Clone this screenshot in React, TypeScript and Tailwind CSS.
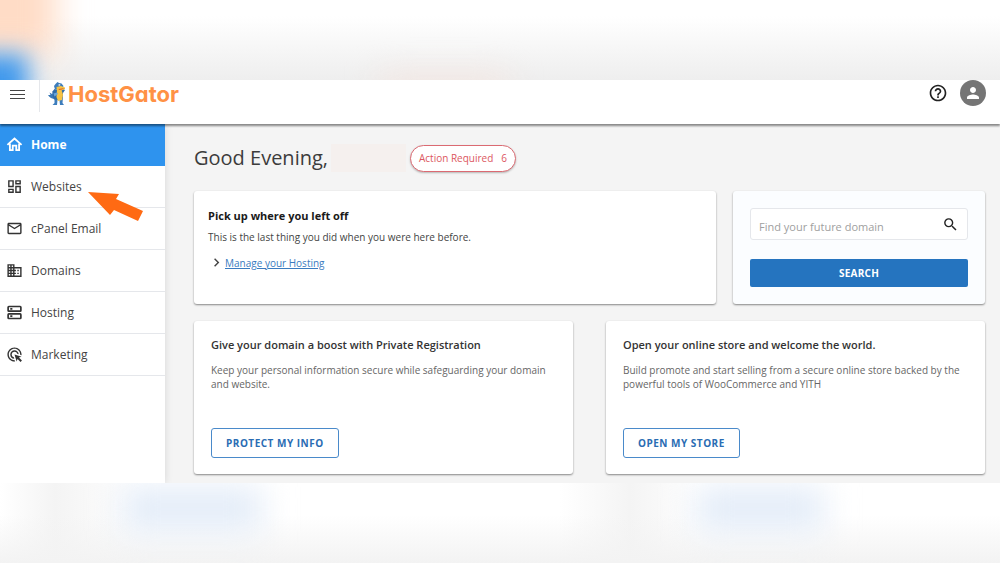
import React from 'react';
import {
  MdAdsClick,
  MdChevronRight,
  MdDomain,
  MdHelpOutline,
  MdOutlineDashboard,
  MdOutlineMail,
  MdPerson,
  MdSearch,
} from 'react-icons/md';

type IconProps = { size: number; className?: string };

const HomeIcon = ({ size, className }: IconProps) => (
  <svg width={size} height={size} viewBox="0 0 24 24" fill="none" stroke="currentColor" strokeWidth="2.6" className={className} aria-hidden="true">
    <path d="M2 12.5L12 3.5l10 9" />
    <path d="M5.5 10.5V20h4v-6.5h5V20h4v-9.5" />
  </svg>
);

const ServerIcon = ({ size, className }: IconProps) => (
  <svg width={size} height={size} viewBox="0 0 24 24" fill="none" stroke="currentColor" strokeWidth="2.4" className={className} aria-hidden="true">
    <rect x="3" y="3.5" width="18" height="6.5" rx="1" />
    <rect x="3" y="14" width="18" height="6.5" rx="1" />
    <path d="M6 6.75h3M6 17.25h3" />
  </svg>
);

const navItems = [
  { label: 'Home', icon: HomeIcon },
  { label: 'Websites', icon: MdOutlineDashboard },
  { label: 'cPanel Email', icon: MdOutlineMail },
  { label: 'Domains', icon: MdDomain },
  { label: 'Hosting', icon: ServerIcon },
  { label: 'Marketing', icon: MdAdsClick },
];

const offers = [
  {
    title: 'Give your domain a boost with Private Registration',
    text: 'Keep your personal information secure while safeguarding your domain and website.',
    action: 'PROTECT MY INFO',
  },
  {
    title: 'Open your online store and welcome the world.',
    text: 'Build promote and start selling from a secure online store backed by the powerful tools of WooCommerce and YITH',
    action: 'OPEN MY STORE',
  },
];

const GatorMark = () => (
  <svg width="18" height="24" viewBox="0 0 36 48" aria-hidden="true">
    {/* tail */}
    <path d="M15 34C8 34 3 31 0 26l5 0-2-5 5 3 2-4 5 5z" fill="#3a78b5" />
    {/* legs */}
    <path d="M13 32l0 10-4 4h9l1-10 4 0 1 10h8l-3-4 1-12z" fill="#3d7dbc" />
    {/* back and arms */}
    <path d="M13 14l-5 6 3 3-2 4 3 8 15 1 3-8 0-6 4-6-4-2-6 4z" fill="#2f6ba8" />
    {/* belly */}
    <path d="M18 17l9-1 3 9-2 11-8 2-3-8z" fill="#f6c344" />
    <path d="M11 23l7-2 2 3-7 5z" fill="#68a5da" />
    {/* head */}
    <path d="M12 8l3-4 4-4 3 2 5 1 4 5-2 5-8 3-7-1z" fill="#3d7dbc" />
    <path d="M17 10l9-2 8 3 0 3-7 3-9 1z" fill="#f6c344" />
    <path d="M21 14l12-2-5 3-6 1z" fill="#d9622b" />
    <circle cx="23" cy="6" r="2" fill="#fff" />
    <circle cx="24" cy="6" r="1" fill="#16324f" />
  </svg>
);

const Header = () => (
  <header className="relative z-10 flex h-11 items-start justify-between bg-white pr-3.5 shadow-[0_2px_2px_rgba(0,0,0,0.45)]">
    <div className="flex items-start">
      <button aria-label="Menu" className="flex h-8 w-10 items-start border-r border-gray-200 pt-[9px] pl-2.5 text-[#444]">
        <svg width="15" height="11" viewBox="0 0 15 11" stroke="currentColor" aria-hidden="true">
          <path d="M0 1.5h15M0 5.5h15M0 9.5h15" />
        </svg>
      </button>
      <a href="#home" className="flex items-center pt-0.5 pl-2">
        <GatorMark />
        <span className="pl-0.5 font-['Inter'] text-[22px] leading-6 font-bold text-[#ff9145] [font-feature-settings:'cv11']">
          HostGator
        </span>
      </a>
    </div>
    <div className="flex items-center gap-3">
      <button aria-label="Help" className="text-[#222]">
        <MdHelpOutline size={20} />
      </button>
      <button aria-label="Account" className="flex size-[26px] items-center justify-center rounded-full bg-[#757575] text-white">
        <MdPerson size={18} />
      </button>
    </div>
  </header>
);

const Sidebar = () => (
  <nav className="w-[165px] shrink-0 bg-white shadow-[0_0_8px_rgba(0,0,0,0.12)]">
    {navItems.map(({ label, icon: Icon }) => (
      <a
        key={label}
        href="#nav"
        className={`relative flex h-[42px] items-center gap-2 border-b pl-1.5 text-xs ${
          label === 'Home' ? 'border-[#2e93ee] bg-[#2e93ee] font-bold text-white' : 'border-gray-200 text-[#444]'
        }`}
      >
        <Icon size={17} className={label === 'Home' ? 'text-white' : 'text-[#333]'} />
        {label}
        {label === 'Websites' && (
          <svg className="absolute top-[25px] left-[87px]" width="57" height="32" viewBox="0 0 57 32" aria-hidden="true">
            <path d="M1 1l31 2-3 5 27 12-5 10-24-11-4 5z" fill="#ff6a13" />
          </svg>
        )}
      </a>
    ))}
  </nav>
);

const cardStyle = 'rounded-[3px] shadow-[0_1px_2px_rgba(0,0,0,0.45)]';

const App: React.FC = () => {
  return (
    <div className="flex min-h-screen flex-col bg-white font-['Open_Sans',sans-serif]">
      {/* Soft colour band above the panel */}
      <div className="relative h-20 shrink-0 overflow-hidden bg-[linear-gradient(to_bottom,#fff_20%,#eeeeee)]">
        <div className="absolute -top-10 -left-10 h-24 w-24 bg-[#ffdcc6] blur-lg" />
        <div className="absolute top-[54px] -left-10 h-20 w-[68px] bg-[#3f98ec] blur-md" />
        <div className="absolute top-[76px] left-[380px] h-5 w-32 bg-[#f5e5df] blur-lg" />
      </div>

      <div className="flex flex-1 flex-col">
        <Header />
        <div className="flex flex-1 bg-[#f4f4f4]">
          <Sidebar />
          <main className="min-w-0 flex-1 pt-5 pr-[15px] pb-2 pl-[29px]">
            <div className="flex h-7 items-center">
              <h1 className="text-xl text-[#3c3c3c]">Good Evening,</h1>
              <span className="ml-[3px] h-7 w-[75px] bg-[#f5f0ee]" />
              <button className="ml-1 flex h-[27px] items-center gap-2 rounded-full border border-[#db6a72] bg-white px-2 text-[10px] text-[#dc5761] shadow-[0_1px_2px_rgba(0,0,0,0.25)]">
                <span>Action Required</span>
                <span>6</span>
              </button>
            </div>

            <div className="mt-[19px] flex gap-[17px]">
              <section className={`min-w-0 flex-1 bg-white px-3.5 pt-4 ${cardStyle}`}>
                <h2 className="text-[11px] leading-[17px] font-bold text-[#1a1a1a]">Pick up where you left off</h2>
                <p className="mt-[5px] text-[10px] leading-4 text-[#444]">
                  This is the last thing you did when you were here before.
                </p>
                <div className="mt-[9px] flex items-center text-[10px] leading-4">
                  <MdChevronRight size={17} className="text-[#444]" />
                  <a href="#hosting" className="text-[#3a7bc0] underline">Manage your Hosting</a>
                </div>
              </section>

              <form className={`w-63 bg-[#fbfdff] p-[17px] ${cardStyle}`}>
                <label className="flex h-8 items-center rounded-[3px] border border-gray-200 bg-white px-2">
                  <input
                    aria-label="Find your future domain"
                    placeholder="Find your future domain"
                    className="min-w-0 flex-1 pt-1.5 text-[11px] outline-none placeholder:text-[#a0a0a0]"
                  />
                  <MdSearch size={17} className="text-[#222]" />
                </label>
                <button type="button" className="mt-[19px] h-7 w-full rounded-[2px] bg-[#2574bf] text-[10px] font-bold tracking-wide text-white">
                  SEARCH
                </button>
              </form>
            </div>

            <div className="mt-[17px] grid grid-cols-2 gap-[33px]">
              {offers.map(offer => (
                <section key={offer.title} className={`bg-white px-[17px] py-4 ${cardStyle}`}>
                  <h2 className="text-[11px] leading-4 font-semibold text-[#333]">{offer.title}</h2>
                  <p className="mt-2.5 text-[10px] leading-[14px] text-[#666]">{offer.text}</p>
                  <button className="mt-[37px] h-[30px] rounded-[3px] border border-[#4a8aca] px-3.5 text-[10px] font-bold tracking-wider text-[#2a6cb3]">
                    {offer.action}
                  </button>
                </section>
              ))}
            </div>
          </main>
        </div>
      </div>

      {/* Soft colour band below the panel */}
      <div className="relative h-20 shrink-0 overflow-hidden bg-[linear-gradient(to_bottom,#f3f3f300_40%,#f3f3f3),linear-gradient(to_right,#fff_0,#f4f4f4_55px,#fff_140px,#fff_560px,#f4f4f4_630px,#fff_700px)]">
        <div className="absolute top-1 left-[122px] h-11 w-[140px] bg-[#e3ecf8] blur-lg" />
        <div className="absolute top-1 left-[696px] h-11 w-[128px] bg-[#e3ecf8] blur-lg" />
      </div>
    </div>
  );
};

export default App;
